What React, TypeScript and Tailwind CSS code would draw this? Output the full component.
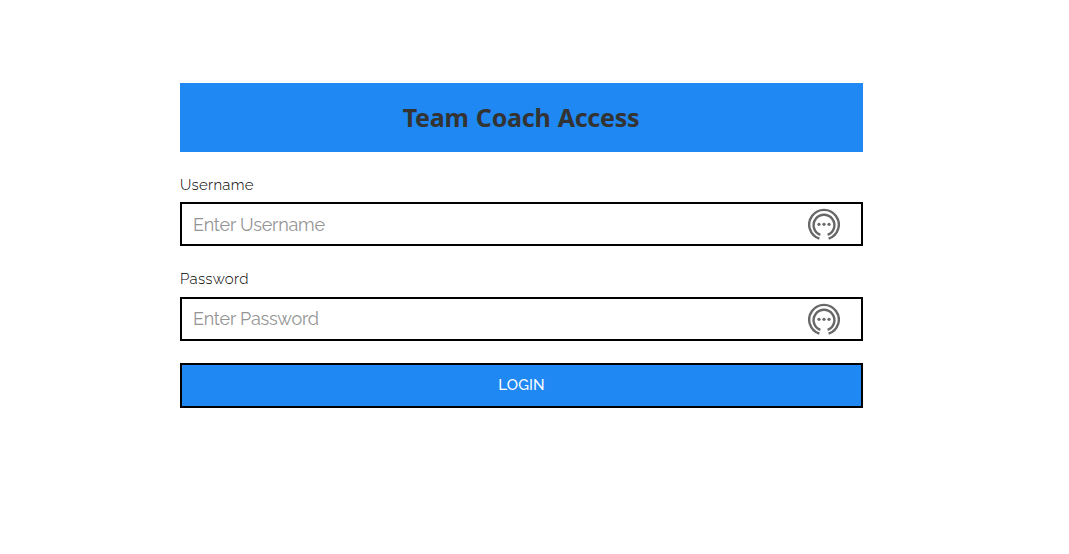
function KeeperIcon() {
  return (
    <svg
      className="h-8 w-8 shrink-0"
      viewBox="0 -0.5 32 32"
      fill="none"
      stroke="#686868"
      strokeWidth="2.4"
      aria-hidden="true"
    >
      <path d="M11.4 30.2A14.8 14.8 0 1 1 20.6 30.2" />
      <path d="M12.4 26.4A10.4 10.4 0 1 1 19.6 26.4" />
      <g fill="#686868" stroke="none">
        <circle cx="11" cy="15.8" r="1.6" />
        <circle cx="16" cy="15.8" r="1.6" />
        <circle cx="21" cy="15.8" r="1.6" />
      </g>
    </svg>
  );
}

interface FieldProps {
  label: string;
  type: string;
  placeholder: string;
  labelClass: string;
  inputClass: string;
}

function Field({ label, type, placeholder, labelClass, inputClass }: FieldProps) {
  return (
    <label className="block">
      <span
        className={`block text-[15px] leading-[18px] font-light tracking-[0.3px] text-black ${labelClass}`}
      >
        {label}
      </span>
      <span className="flex h-11 items-center border-2 border-black pr-[21px] pl-[11px]">
        <input
          type={type}
          placeholder={placeholder}
          className={`h-full min-w-0 flex-1 bg-transparent text-[18px] tracking-[-0.2px] outline-none placeholder:text-[#949494] ${inputClass}`}
        />
        <KeeperIcon />
      </span>
    </label>
  );
}

export default function App() {
  return (
    <main className="h-[554px] bg-white pt-[83px] pl-[180px] font-['Raleway','Lato',sans-serif]">
      <form className="w-[683px]">
        <h1 className="flex h-[69px] items-center justify-center bg-[#1f88f2] pr-px font-['Noto_Sans',sans-serif] text-[25px] font-bold tracking-[-0.25px] text-[#333333] [word-spacing:1px]">
          Team Coach Access
        </h1>
        <div className="mt-6 flex flex-col">
          <Field
            label="Username"
            type="text"
            placeholder="Enter Username"
            labelClass="pb-2"
            inputClass="pb-0"
          />
          <div className="mt-6">
            <Field
              label="Password"
              type="password"
              placeholder="Enter Password"
              labelClass="pb-[9px]"
              inputClass="pb-[2px]"
            />
          </div>
        </div>
        <button
          type="button"
          className="mt-[22px] block h-[45px] w-full border-2 border-black bg-[#1f88f2] pb-px text-[15px] font-medium tracking-[0.15px] text-white"
        >
          LOGIN
        </button>
      </form>
    </main>
  );
}
